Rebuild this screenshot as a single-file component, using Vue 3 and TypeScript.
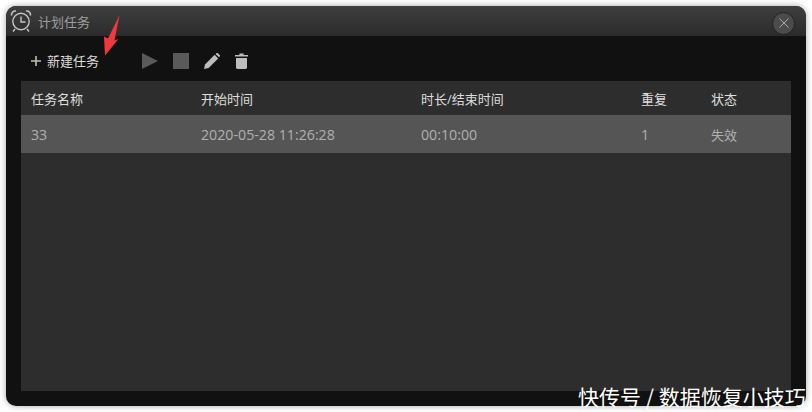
<script setup lang="ts">
const columns = [
  { key: 'name', label: '任务名称', width: '170px' },
  { key: 'start', label: '开始时间', width: '220px' },
  { key: 'duration', label: '时长/结束时间', width: '220px' },
  { key: 'repeat', label: '重复', width: '70px' },
  { key: 'status', label: '状态', width: '80px' }
];

const tasks: Record<string, string>[] = [
  { name: '33', start: '2020-05-28 11:26:28', duration: '00:10:00', repeat: '1', status: '失效' }
];
</script>

<template>
  <div class="page">
    <div class="window">
      <header class="titlebar">
        <svg class="clock" width="22" height="24" viewBox="0 0 22 24" fill="none" stroke="#c4c4c4">
          <circle cx="11" cy="12.5" r="8.200" stroke-width="1.4" />
          <path d="M11 7.500v5.500h4.500" stroke-width="1.4" />
          <path d="M1.500 6.500C1.200 3.600 3.400 1.600 6 2M20.500 6.500C20.800 3.600 18.600 1.600 16 2" stroke-width="1.600" />
          <path d="M5 20l-2 2.500M17 20l2 2.500" stroke-width="1.4" />
        </svg>
        <span class="title">计划任务</span>
        <button class="close">
          <svg width="10" height="10" viewBox="0 0 10 10" stroke="#b5b5b5" stroke-width="0.9">
            <path d="M0.500 0.500l9 9M9.500 0.500l-9 9" />
          </svg>
        </button>
      </header>

      <div class="toolbar">
        <button class="new-task">
          <svg width="10" height="10" viewBox="0 0 10 10" fill="#bdbdbd">
            <path d="M4.200 0h1.600v4.200H10v1.600H5.800V10H4.200V5.800H0V4.200h4.200z" />
          </svg>
          新建任务
        </button>
        <div class="tools">
          <svg width="16" height="16" viewBox="0 0 16 16" fill="#5a5a5a"><path d="M0 0l16 8-16 8z" /></svg>
          <svg width="16" height="16" viewBox="0 0 16 16" fill="#5a5a5a"><rect width="16" height="16" /></svg>
          <svg width="16" height="16" viewBox="0 0 16 16" fill="#bdbdbd">
            <path d="M0 16l1-4.600L10.600 1.800l3.600 3.600L4.600 15z" />
            <path d="M11.600 0.900l1-0.900c.4-.2.8-.2 1.100 0l2.200 2.200c.2.4.2.8 0 1.100l-0.900 1z" />
          </svg>
          <svg width="13" height="16" viewBox="0 0 13 16" fill="#bdbdbd">
            <path d="M0 2h4.400V.6h4.200V2H13v1.600H0zM1 5h11v9.600c0 .8-.6 1.400-1.400 1.400H2.400C1.600 16 1 15.400 1 14.600z" />
          </svg>
        </div>
      </div>

      <div class="table">
        <div class="head">
          <span v-for="col in columns" :key="col.key" class="cell" :style="{ width: col.width }">{{ col.label }}</span>
        </div>
        <div v-for="(task, i) in tasks" :key="i" class="row">
          <span
            v-for="col in columns"
            :key="col.key"
            class="cell"
            :class="{ cjk: col.key === 'status' }"
            :style="{ width: col.width }"
          >{{ task[col.key] }}</span>
        </div>
      </div>
    </div>

    <svg class="arrow" width="20" height="44" viewBox="0 0 20 44" fill="#ee3a3f">
      <path d="M15.500 0L10.500 25.500 14.500 24 1 40.500 0 21.500 4 23.500z" transform="translate(3 0)" />
    </svg>
    <div class="watermark">快传号 / 数据恢复小技巧</div>
  </div>
</template>

<style scoped>
.page {
  position: relative;
  width: 812px;
  height: 412px;
  padding: 6px;
  box-sizing: border-box;
  overflow: hidden;
  background: #fff;
  font-family: "Open Sans", "Noto Sans CJK SC", sans-serif;
  font-size: 13px;
}

.window {
  height: 400px;
  display: flex;
  flex-direction: column;
  background: #111;
  border-radius: 10px;
  box-shadow: 0 0 6px rgba(0, 0, 0, 0.35);
  overflow: hidden;
}

.titlebar {
  height: 30px;
  flex: none;
  display: flex;
  align-items: center;
  padding: 0 11px 0 4px;
  background: linear-gradient(#3f3f3f, #2b2b2b);
}

.clock {
  flex: none;
}

.title {
  margin-left: 6px;
  color: #9d9d9d;
  font-size: 13px;
}

.close {
  margin: 4px 0 0 auto;
  width: 23px;
  height: 23px;
  padding: 0;
  display: flex;
  align-items: center;
  justify-content: center;
  border: 1px solid #222;
  border-radius: 50%;
  background: #4b4b4b;
}

.toolbar {
  height: 45px;
  flex: none;
  display: flex;
  align-items: center;
  padding: 4px 0 0 25px;
  box-sizing: border-box;
}

.new-task {
  display: flex;
  align-items: center;
  gap: 6px;
  padding: 0;
  border: 0;
  background: none;
  color: #dcdcdc;
  font: inherit;
}

.tools {
  display: flex;
  align-items: center;
  gap: 15px;
  margin-left: 43px;
  padding-top: 1px;
}

.table {
  flex: 1;
  margin: 0 15px 15px;
  background: #2d2d2d;
}

.head,
.row {
  display: flex;
  align-items: center;
  padding-left: 10px;
}

.head {
  height: 34px;
  color: #dedede;
}

.row {
  height: 38px;
  background: #555;
  color: #b0b0b0;
  font-size: 14.2px;
}

.cell {
  flex: none;
}

.cell.cjk {
  font-size: 13px;
}

.arrow {
  position: absolute;
  left: 101px;
  top: 15px;
}

.watermark {
  position: absolute;
  left: 578px;
  top: 382px;
  color: #fff;
  font-size: 21px;
  line-height: 28px;
  white-space: nowrap;
  font-family: "Noto Sans CJK SC", sans-serif;
}
</style>

<style>
html,
body {
  margin: 0;
  background: #fff;
}
</style>
